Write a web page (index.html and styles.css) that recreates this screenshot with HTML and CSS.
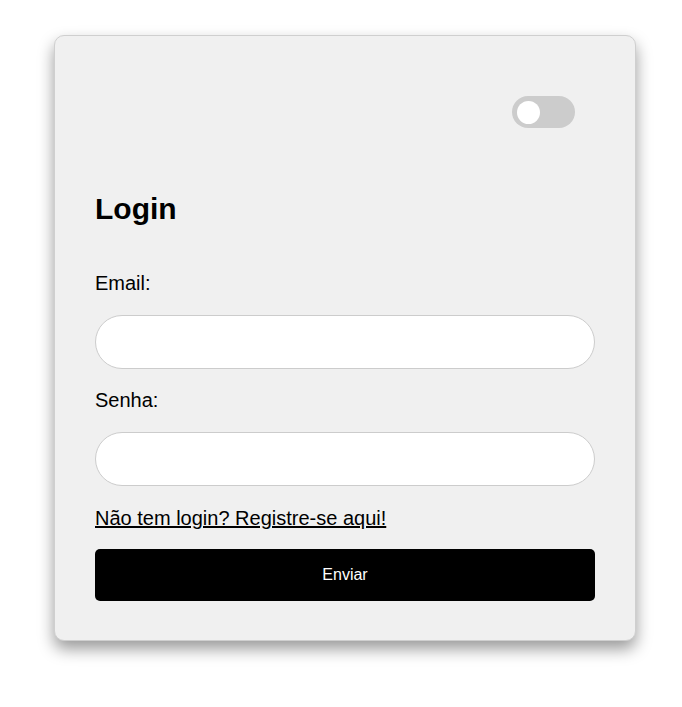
FILE: index.html
```html
<!DOCTYPE html>
<html lang="pt-BR">
<head>
<meta charset="utf-8">
<title>Login</title>
<link rel="stylesheet" href="styles.css">
</head>
<body>
<main class="page">
  <section class="card">
    <div class="card-top">
      <label class="switch">
        <input type="checkbox" class="switch-input">
        <span class="switch-track"><span class="switch-knob"></span></span>
      </label>
    </div>
    <h2 class="title">Login</h2>
    <form class="form">
      <label class="label" for="email">Email:</label>
      <input class="field" id="email" type="email">
      <label class="label" for="senha">Senha:</label>
      <input class="field" id="senha" type="password">
      <a class="link" href="#">Não tem login? Registre-se aqui!</a>
      <button class="submit" type="button">Enviar</button>
    </form>
  </section>
</main>
</body>
</html>
```

FILE: styles.css
```css
html, body {
  margin: 0;
  padding: 0;
  background: #ffffff;
  font-family: "Liberation Sans", Arial, sans-serif;
}

.page {
  display: flex;
  padding: 35px 0 66px 54px;
}

.card {
  box-sizing: border-box;
  width: 582px;
  padding: 40px 40px 39px 40px;
  background: #f0f0f0;
  border: 1px solid #cfcfcf;
  border-radius: 10px;
  box-shadow: 0 8px 16px rgba(0, 0, 0, 0.4);
}

.card-top {
  display: flex;
  justify-content: flex-end;
  padding: 20px 20px 0 0;
}

.switch {
  display: block;
  width: 63px;
  height: 32px;
  cursor: pointer;
}

.switch-input {
  display: none;
}

.switch-track {
  box-sizing: border-box;
  display: flex;
  align-items: center;
  width: 63px;
  height: 32px;
  padding-left: 5px;
  border-radius: 16px;
  background: #cccccc;
}

.switch-knob {
  width: 23px;
  height: 23px;
  border-radius: 50%;
  background: #ffffff;
}

.title {
  margin: 64px 0 0 0;
  font-size: 30px;
  font-weight: bold;
  color: #000000;
  line-height: 34px;
}

.form {
  display: flex;
  flex-direction: column;
  gap: 20px;
  margin-top: 46px;
}

.label {
  font-size: 20px;
  line-height: 23px;
  color: #000000;
}

.field {
  box-sizing: border-box;
  width: 500px;
  height: 54px;
  margin: 0;
  padding: 0 20px;
  border: 1px solid #cccccc;
  border-radius: 27px;
  background: #ffffff;
  font-size: 16px;
  font-family: "Liberation Sans", Arial, sans-serif;
  outline: none;
}

.link {
  font-size: 20px;
  line-height: 23px;
  color: #000000;
  text-decoration: underline;
  align-self: flex-start;
  margin-top: 1px;
  margin-bottom: -1px;
}

.submit {
  width: 500px;
  height: 52px;
  margin: 0;
  border: none;
  border-radius: 5px;
  background: #000000;
  color: #ffffff;
  font-size: 16px;
  font-family: "Liberation Sans", Arial, sans-serif;
  cursor: pointer;
}
```
